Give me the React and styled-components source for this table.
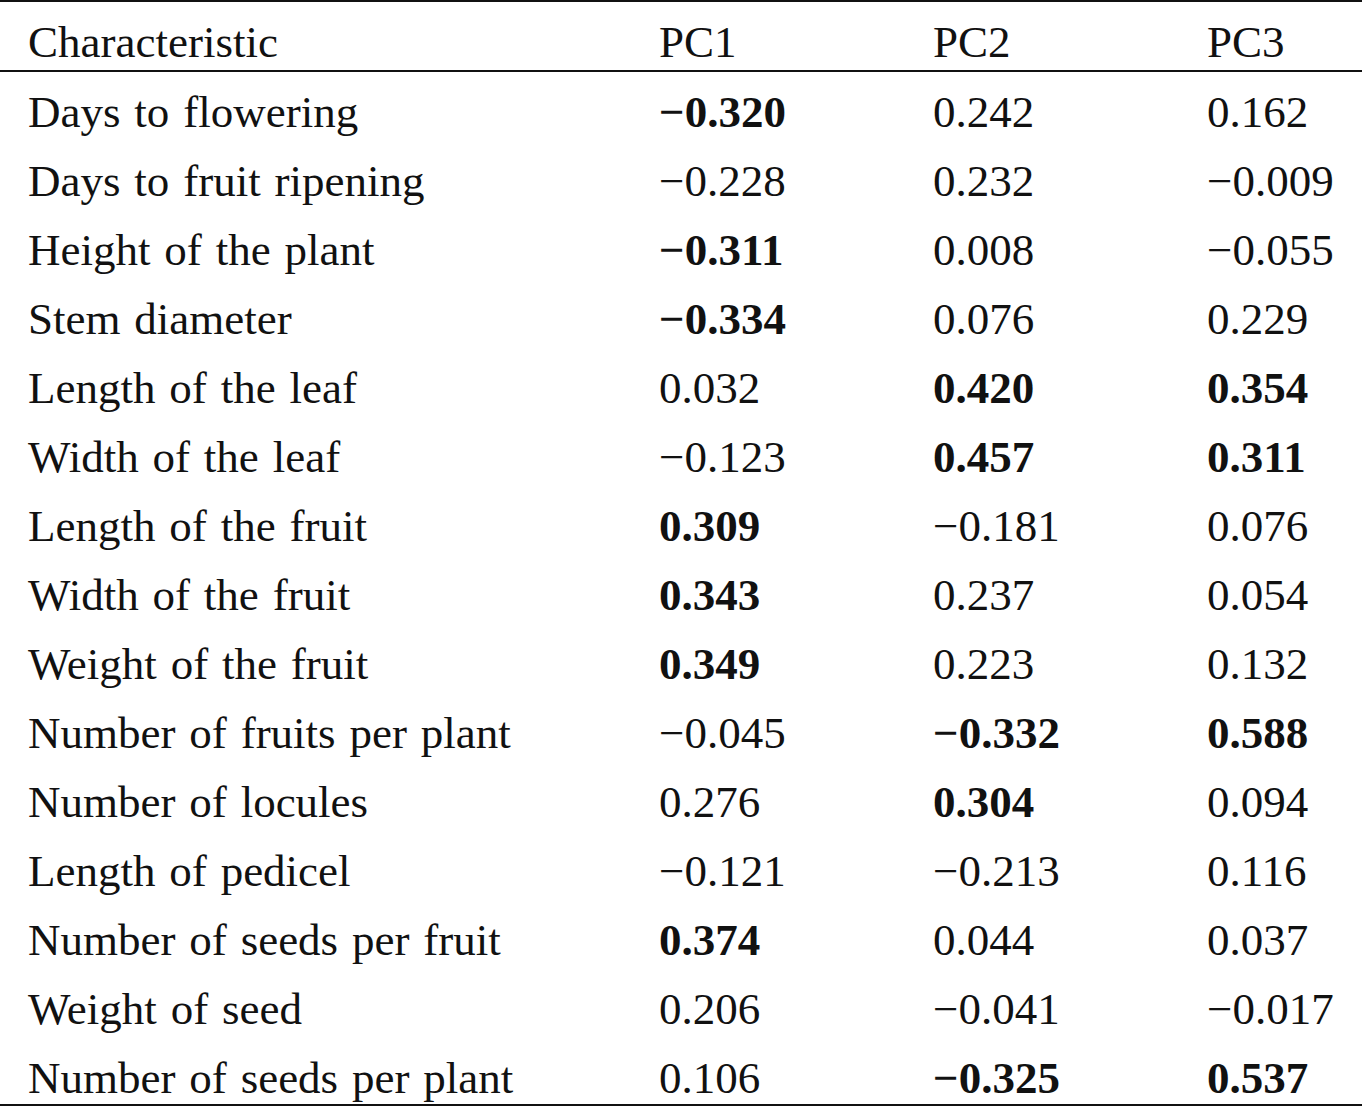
import React from 'react'
import styled, { createGlobalStyle } from 'styled-components'

const GlobalStyle = createGlobalStyle`
    html, body {
        margin: 0;
        padding: 0;
        background: #ffffff;
    }
    body {
        font-family: "Liberation Serif", "Times New Roman", serif;
        color: #111;
    }
`

const Table = styled.div`
    width: 1362px;
    border-top: 2px solid #111;
    border-bottom: 2px solid #111;
`

const Row = styled.div`
    display: grid;
    grid-template-columns: 631px 274px 274px 1fr;
    padding-left: 28px;
    height: ${p => (p.$head ? '68px' : '69px')};
    border-bottom: ${p => (p.$head ? '2px solid #111' : 'none')};
    box-sizing: content-box;

    &:last-child {
        height: 66px;
    }
`

const Cell = styled.div`
    font-size: 45px;
    line-height: 1;
    padding-top: 18px;
    word-spacing: 2.6px;
    white-space: nowrap;
    font-weight: ${p => (p.$bold ? 700 : 400)};
`

const rows = [
    ['Days to flowering', '*−0.320', '0.242', '0.162'],
    ['Days to fruit ripening', '−0.228', '0.232', '−0.009'],
    ['Height of the plant', '*−0.311', '0.008', '−0.055'],
    ['Stem diameter', '*−0.334', '0.076', '0.229'],
    ['Length of the leaf', '0.032', '*0.420', '*0.354'],
    ['Width of the leaf', '−0.123', '*0.457', '*0.311'],
    ['Length of the fruit', '*0.309', '−0.181', '0.076'],
    ['Width of the fruit', '*0.343', '0.237', '0.054'],
    ['Weight of the fruit', '*0.349', '0.223', '0.132'],
    ['Number of fruits per plant', '−0.045', '*−0.332', '*0.588'],
    ['Number of locules', '0.276', '*0.304', '0.094'],
    ['Length of pedicel', '−0.121', '−0.213', '0.116'],
    ['Number of seeds per fruit', '*0.374', '0.044', '0.037'],
    ['Weight of seed', '0.206', '−0.041', '−0.017'],
    ['Number of seeds per plant', '0.106', '*−0.325', '*0.537'],
]

const Value = ({ v }) => {
    const bold = v.startsWith('*')
    return <Cell $bold={bold}>{bold ? v.slice(1) : v}</Cell>
}

const App = () => {
  return (
    <>
        <GlobalStyle />
        <Table>
            <Row $head>
                <Cell>Characteristic</Cell>
                <Cell>PC1</Cell>
                <Cell>PC2</Cell>
                <Cell>PC3</Cell>
            </Row>
            {rows.map(([name, a, b, c]) => (
                <Row key={name}>
                    <Cell>{name}</Cell>
                    <Value v={a} />
                    <Value v={b} />
                    <Value v={c} />
                </Row>
            ))}
        </Table>
    </>
  )
}

export default App
